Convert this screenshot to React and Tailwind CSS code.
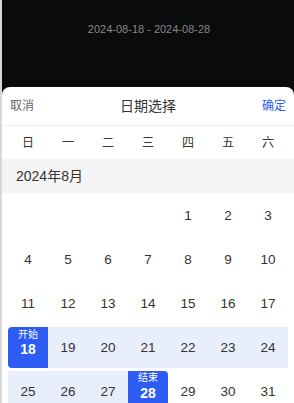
import React from "react";

const font = { fontFamily: '"Liberation Sans", "Noto Sans CJK SC", sans-serif' };

const weekdays = ["日", "一", "二", "三", "四", "五", "六"];

const rows = [
  [null, null, null, null, 1, 2, 3],
  [4, 5, 6, 7, 8, 9, 10],
  [11, 12, 13, 14, 15, 16, 17],
  [18, 19, 20, 21, 22, 23, 24],
  [25, 26, 27, 28, 29, 30, 31],
];

function DayCell({ d }) {
  if (d === null) return <div className="h-[41px]" />;
  if (d === 18 || d === 28) {
    const start = d === 18;
    return (
      <div
        className={
          "relative h-[41px] flex items-center justify-center bg-[#2c5cf2] text-white " +
          (start ? "rounded-l-[4px]" : "rounded-r-[4px]")
        }
      >
        <span className={"absolute left-0 right-0 text-center text-[10px] leading-[12px] " + (start ? "top-[2px]" : "top-[1px]")}>
          {start ? "开始" : "结束"}
        </span>
        <span className="text-[14px] font-bold leading-none mt-[3px]">{d}</span>
      </div>
    );
  }
  const inRange = d > 18 && d < 28;
  return (
    <div
      className={
        "h-[41px] flex items-center justify-center text-[13.5px] text-[#333] " +
        (inRange ? "bg-[#e8eefc]" : "")
      }
    >
      <span className="leading-none mt-[1px]">{d}</span>
    </div>
  );
}

export default function App() {
  return (
    <div className="w-[294px] h-[403px] overflow-hidden flex bg-[#0a0b0d]" style={font}>
      <div className="w-[2px] shrink-0 bg-[#d8d8d8]" />
      <div className="flex-1 flex flex-col min-w-0">
        <div className="h-[87px] shrink-0 flex items-start justify-center pt-[22px]">
          <span className="text-[11px] leading-[14px] text-[#888] ml-[2px]">2024-08-18 - 2024-08-28</span>
        </div>
        <div className="flex-1 bg-white rounded-t-[8px] flex flex-col">
          <div className="h-[39px] shrink-0 border-b border-[#f0f0f0] flex items-center justify-between pl-[8px] pr-[8px]">
            <span className="text-[12px] text-[#666]">取消</span>
            <span className="text-[14px] text-[#333]">日期选择</span>
            <span className="text-[12px] text-[#2c5cf2]">确定</span>
          </div>
          <div className="h-[33px] shrink-0 grid grid-cols-7 px-[6px] items-center">
            {weekdays.map((w) => (
              <div key={w} className="text-center text-[12px] text-[#333]">
                {w}
              </div>
            ))}
          </div>
          <div className="h-[34px] shrink-0 bg-[#f5f5f5] flex items-center pl-[14px]">
            <span className="text-[14px] text-[#333]">2024年8月</span>
          </div>
          <div className="grid grid-cols-7 gap-y-[3px] px-[6px] pt-[2px]">
            {rows.flat().map((d, i) => (
              <DayCell key={i} d={d} />
            ))}
          </div>
        </div>
      </div>
    </div>
  );
}
